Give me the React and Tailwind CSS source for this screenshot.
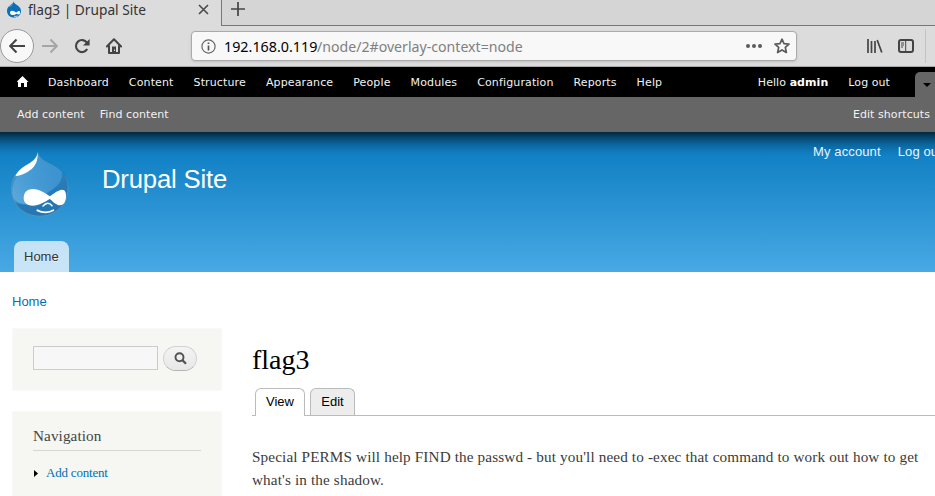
import React from "react";

const adminLinks = [
  "Dashboard", "Content", "Structure", "Appearance", "People",
  "Modules", "Configuration", "Reports", "Help",
];

function Drop({ className }) {
  return (
    <svg viewBox="33 65 174 195" className={className}>
      <defs>
        <linearGradient id="drop" x1="0" y1="0" x2="0.3" y2="1">
          <stop offset="0" stopColor="#3f9ad4" />
          <stop offset="0.6" stopColor="#348dcb" />
          <stop offset="1" stopColor="#2c80bf" />
        </linearGradient>
        <linearGradient id="shine" x1="0" y1="1" x2="0.7" y2="0.2">
          <stop offset="0" stopColor="#7fc0ea" stopOpacity="0.6" />
          <stop offset="1" stopColor="#4a9fd8" stopOpacity="0.3" />
        </linearGradient>
      </defs>
      <path d="M113 67C117 85 134 94 156 105C190 123 204 146 204 174C204 224 167 257 119 257C71 257 35 222 35 176C35 146 47 126 72 109C94 95 110 88 113 67Z" fill="url(#drop)" stroke="#5f93b5" strokeWidth="3" />
      <path d="M203 158C199 139 193 128 186 124C190 140 180 160 158 178C140 190 126 203 124 222C100 226 70 225 47 218C63 246 92 256 119 256C172 255 206 216 203 158Z" fill="#1c6aa5" opacity="0.45" />
      <path d="M37 190C35 155 52 132 72 116C94 101 112 92 115 76C125 96 147 103 170 117C197 131 187 160 158 176C123 194 122 224 80 222C59 221 40 215 37 190Z" fill="url(#shine)" />
      <path d="M113 67C114 94 105 108 90 120C77 130 62 136 46 138C51 125 62 114 76 106C95 95 109 88 113 67Z" fill="#fff" />
      <path d="M71 203C71 185 83 176 99 176C119 176 134 188 150 198C160 190 175 178 187 178C196 178 199 188 198 201C197 216 190 225 180 225C167 225 158 212 149 206C136 214 117 226 98 226C81 226 71 217 71 203Z" fill="#fff" />
      <path d="M129 227C139 216 148 216 156 226" stroke="#fff" strokeWidth="4.500" fill="none" strokeLinecap="round" />
      <path d="M112 240C127 248 147 248 160 240" stroke="#fff" strokeWidth="5.500" fill="none" strokeLinecap="round" />
    </svg>
  );
}

function MiniDrop() {
  return (
    <svg viewBox="0 0 16 18" className="ml-[6px] h-[18px] w-4 shrink-0">
      <path d="M7.500 1.500C8 3.500 10 4.200 12 5.700C14 7.200 15 9 15 11C15 14.800 12 17.500 8 17.500C4 17.500 1 14.800 1 11C1 8.500 2 6.700 4.200 5.200C6 4 7.500 3 7.500 1.500Z" fill="#0b70b9" />
      <path d="M6.800 4C6.200 5.500 4.500 6.200 3 7C4 5.500 5.700 5.200 6.800 4Z" fill="#b9dcf0" />
      <path d="M4 13C4 11 5.500 10.500 7 11C8.500 11.300 9.500 12.500 10.500 12.500C12 11 14 10.200 14 12.500C14 15 12.500 15 10.600 13.800C8 15.600 4.500 15.500 4 13Z" fill="#fff" />
      <path d="M8 16.200Q10 17 11.500 15.900" stroke="#fff" strokeWidth="0.700" fill="none" />
    </svg>
  );
}

function Browser() {
  return (
    <div className="h-[67px] border-b border-[#aaa] bg-[#dcdcdc] font-['Noto_Sans',sans-serif] text-[#333]">
      <div className="flex h-[26px]">
        <div className="flex w-[221px] shrink-0">
          <MiniDrop />
          <span className="ml-[6px] w-[166px] origin-left scale-x-[0.913] whitespace-nowrap text-[15px] leading-[18px]">flag3 | Drupal Site</span>
          <svg viewBox="0 0 11 11" className="mt-[4px] ml-[4px] h-[11px] w-[11px]">
            <path d="M1 1L10 10M10 1L1 10" stroke="#4a4a4a" strokeWidth="1.600" />
          </svg>
        </div>
        <div className="flex-1 border-b border-l border-[#777] bg-[#d5d5d5]">
          <svg viewBox="0 0 14 14" className="mt-[2px] ml-[9px] h-[14px] w-[14px]">
            <path d="M7 0V14M0 7H14" stroke="#444" strokeWidth="1.700" />
          </svg>
        </div>
      </div>
      <div className="flex h-10 items-center">
        <div className="flex h-[34px] w-[34px] shrink-0 items-center justify-center rounded-full border border-[#999] bg-[#f8f8f8]">
          <svg viewBox="0 0 16 16" className="h-4 w-4"><path d="M7.500 1.500L1.200 8L7.500 14.500M1.200 8H16" stroke="#444" strokeWidth="2" fill="none" /></svg>
        </div>
        <svg viewBox="0 0 16 16" className="ml-2 h-4 w-4 shrink-0"><path d="M8.500 1.500L14.800 8L8.500 14.500M14.800 8H0" stroke="#a5a5a5" strokeWidth="1.900" fill="none" /></svg>
        <svg viewBox="0 0 16 16" className="ml-4 h-4 w-4 shrink-0">
          <path d="M13 4.800A6 6 0 1 0 13.200 11" stroke="#444" strokeWidth="2.100" fill="none" />
          <path d="M15.600 1V7.500H9Z" fill="#444" />
        </svg>
        <svg viewBox="0 0 16 16" className="ml-4 h-4 w-4 shrink-0">
          <path d="M0.900 8.500L8 1.300L15.100 8.500M3 8V15H13V8" stroke="#444" strokeWidth="2" fill="none" strokeLinejoin="round" strokeLinecap="round" />
          <path d="M6 15V8.500H10V15M8 11.500H9V13H8Z" fill="#444" fillRule="evenodd" />
        </svg>
        <div className="ml-[69px] flex h-[30px] w-[606px] shrink-0 items-center rounded-[4px] border border-[#aaa] bg-[#f8f8f8] shadow-sm">
          <svg viewBox="0 0 15 15" className="ml-[9px] h-[15px] w-[15px] shrink-0">
            <circle cx="7.500" cy="7.500" r="6.600" stroke="#666" strokeWidth="1.200" fill="none" />
            <path d="M7.500 6.500V11.500M7.500 3.500V5" stroke="#555" strokeWidth="1.700" />
          </svg>
          <span className="ml-[8px] w-[93px] shrink-0 origin-left scale-x-[0.954] whitespace-nowrap text-[15px] text-black">192.168.0.119</span>
          <span className="w-[429px] shrink-0 origin-left scale-x-[0.942] whitespace-nowrap text-[15px] text-[#808080]">/node/2#overlay-context=node</span>
          <svg viewBox="0 0 16 4" className="h-1 w-4 shrink-0"><g fill="#5b5b5b"><circle cx="2" cy="2" r="2" /><circle cx="8" cy="2" r="2" /><circle cx="14" cy="2" r="2" /></g></svg>
          <svg viewBox="0 0 16 16" className="ml-[12px] h-4 w-4 shrink-0"><path d="M8 1.200L10 5.600L15 6.100L11.300 9.400L12.400 14.500L8 11.900L3.600 14.500L4.700 9.400L1 6.100L6 5.600Z" stroke="#5b5b5b" strokeWidth="1.700" strokeLinejoin="round" fill="none" /></svg>
        </div>
        <svg viewBox="0 0 16 14" className="ml-[70px] h-[14px] w-4 shrink-0"><path d="M1 0V14M4.500 2V14M8 2V14M10.200 1L14.800 13.500" stroke="#444" strokeWidth="1.700" fill="none" /></svg>
        <svg viewBox="0 0 16 14" className="ml-[15px] h-[14px] w-4 shrink-0">
          <rect x="1" y="1" width="14" height="12" rx="2" stroke="#444" strokeWidth="2" fill="none" />
          <path d="M7.700 1V13M3 4H6M3 6H6M3 8H5" stroke="#444" strokeWidth="1" />
        </svg>
        <div className="ml-[11px] h-[34px] w-px bg-[#c3c3c3]" />
      </div>
    </div>
  );
}

function AdminBar() {
  return (
    <div className="font-['DejaVu_Sans',sans-serif] text-[11px] tracking-[0.070px] text-[#f2f2f2]">
      <div className="flex h-[30px] items-center bg-black">
        <svg viewBox="0 0 12 11" className="mb-px ml-[17px] h-[11px] w-3 shrink-0"><path d="M5.500 0L11.500 6H10V11H7V7H4V11H1V6H0V5.500Z" fill="#fff" /></svg>
        <nav className="mt-0.5 ml-[19px] flex gap-5 tracking-[0.130px]">
          {adminLinks.map((label) => <span key={label}>{label}</span>)}
        </nav>
        <span className="mt-0.5 ml-auto">Hello <b className="text-white">admin</b></span>
        <span className="mt-0.5 ml-5">Log out</span>
        <div className="ml-[25px] flex h-[25px] w-[20px] items-center self-end rounded-tl-[5px] bg-[#666] pl-[8px]">
          <svg viewBox="0 0 8 4" className="h-1 w-2"><path d="M0 0H8L4 4Z" fill="#000" /></svg>
        </div>
      </div>
      <div className="flex h-[35px] items-center bg-[#666] pt-0.5 pr-[5px] pl-[17px]">
        <span>Add content</span>
        <span className="ml-[15px]">Find content</span>
        <span className="ml-auto">Edit shortcuts</span>
      </div>
    </div>
  );
}

function SiteHeader() {
  return (
    <header className="h-[140px] bg-[linear-gradient(to_bottom,#0779bf,#48a9e4)]">
      <div className="flex h-full flex-col bg-[linear-gradient(to_bottom,rgba(0,0,0,0.68)_0px,rgba(0,0,0,0.45)_5px,rgba(0,0,0,0.2)_12px,rgba(0,0,0,0.04)_20px,transparent_25px)]">
        <div className="flex h-[109px]">
          <Drop className="mt-[20px] ml-[11px] h-[65px] w-[58px] shrink-0" />
          <h1 className="mt-[32px] ml-[33px] text-[25.700px] leading-[30px] tracking-[-0.180px] whitespace-nowrap text-white">Drupal Site</h1>
          <nav className="mt-[10px] ml-auto flex w-[122px] gap-[17px] overflow-hidden text-[13px] leading-5 tracking-[0.120px] whitespace-nowrap text-[#e8f4fc]">
            <span>My account</span>
            <span>Log out</span>
          </nav>
        </div>
        <div className="ml-[14px] h-[31px] w-[55px] rounded-t-[8px] bg-white/70 pl-[10px] text-[13px] leading-[31px] text-[#333] [text-shadow:0_1px_0_#eee]">Home</div>
      </div>
    </header>
  );
}

function Sidebar() {
  return (
    <aside className="w-[210px] shrink-0">
      <div className="flex h-[63px] border border-[#f9f9f9] bg-[#f6f6f2] pt-[17px] pl-5">
        <input aria-label="Search" className="h-6 w-[125px] border border-[#ccc] bg-[#f7f7f7]" />
        <button aria-label="Search" className="ml-[5px] flex h-[25px] w-[34px] items-center justify-center rounded-[13px] border border-[#d2d2d2] border-b-[#b4b4b4] bg-linear-to-b from-[#f3f3f3] to-[#e8e8e8]">
          <svg viewBox="0 0 13 13" className="h-[13px] w-[13px]">
            <circle cx="5.500" cy="5.300" r="4" stroke="#505050" strokeWidth="1.900" fill="none" />
            <path d="M8.200 8L12 11.700" stroke="#505050" strokeWidth="2.200" />
          </svg>
        </button>
      </div>
      <div className="mt-5 h-[100px] border border-[#f9f9f9] bg-[#f6f6f2] px-5 pt-[14px] font-['Liberation_Serif',serif]">
        <h2 className="h-[25px] border-b border-[#d6d6d6] text-[15.200px] leading-[19px] tracking-[0.100px] text-[#444]">Navigation</h2>
        <div className="mt-3 flex items-center text-[13px] leading-5 tracking-[-0.200px] text-[#0071b3]">
          <svg viewBox="0 0 4 7" className="ml-px h-[7px] w-1"><path d="M0 0L4 3.500L0 7Z" fill="#000" /></svg>
          <span className="ml-2">Add content</span>
        </div>
      </div>
    </aside>
  );
}

export default function App() {
  return (
    <div className="h-[496px] w-[935px] overflow-hidden bg-white font-['Liberation_Sans',Arial,sans-serif]">
      <Browser />
      <AdminBar />
      <SiteHeader />
      <div className="h-14 pt-5 pl-3 text-[13px] leading-5 text-[#0071b3]">Home</div>
      <div className="flex pl-3">
        <Sidebar />
        <main className="ml-[30px] flex-1 font-['Liberation_Serif',serif]">
          <h1 className="mt-4 text-[28px] leading-8 text-black">flag3</h1>
          <div className="mt-3 flex h-7 items-end border-b border-[#bbb] pl-[3px] font-['Liberation_Sans',Arial,sans-serif] text-[13px] text-black">
            <span className="-mb-px h-7 w-[50px] rounded-t-[6px] border border-b-0 border-[#bbb] bg-white text-center leading-[26px]">View</span>
            <span className="ml-[5px] h-[27px] w-[45px] rounded-t-[6px] border border-b-0 border-[#bbb] bg-[#ededed] text-center leading-[26px]">Edit</span>
          </div>
          <p className="mt-[29px] text-[15.200px] leading-[23px] tracking-[0.138px] whitespace-nowrap text-[#3b3b3b]">
            Special PERMS will help FIND the passwd - but you'll need to -exec that command to work out how to get
            <br />
            what's in the shadow.
          </p>
        </main>
      </div>
    </div>
  );
}
